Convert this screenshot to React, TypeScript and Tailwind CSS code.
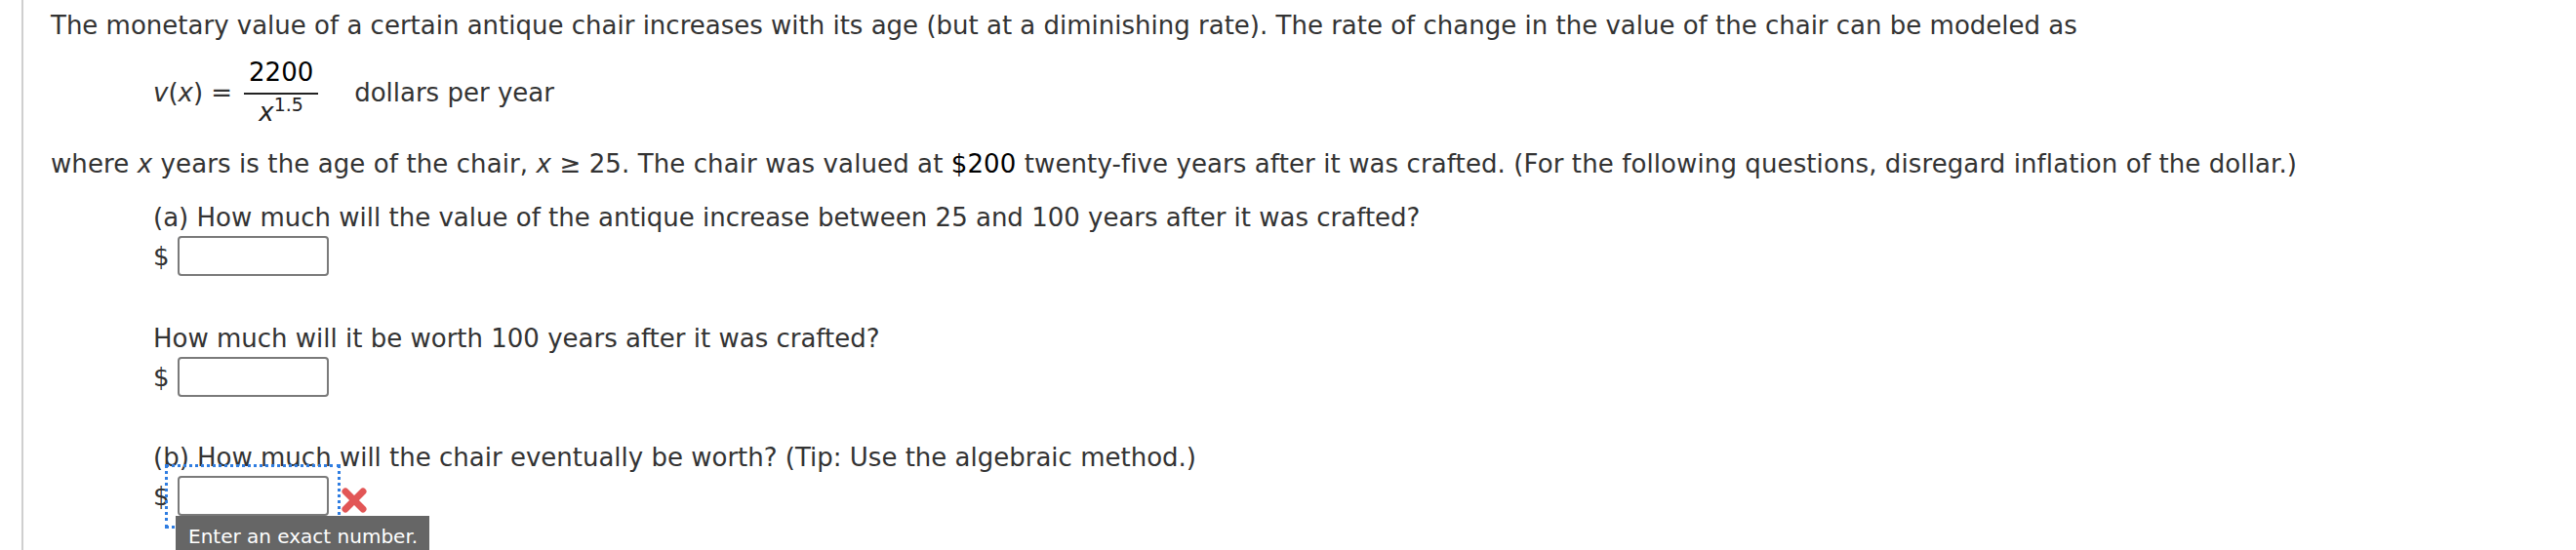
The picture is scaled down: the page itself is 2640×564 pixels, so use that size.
// WebAssign-style question: chair value model with three answer blanks.

function AnswerBox() {
  return <div className="h-[41px] w-[155px] rounded-[4px] border-2 border-[#7a7a7a] bg-white" />;
}

function AnswerRow({ invalid }: { invalid?: boolean }) {
  return (
    <div className="relative mt-[1px] flex h-[41px] items-center">
      <span className="leading-[30px]">$</span>
      <div className="ml-[8px]">
        <AnswerBox />
      </div>
      {invalid && (
        <>
          <svg className="ml-[12px] mt-[8px]" width="28" height="28" viewBox="0 0 28 28">
            <path d="M5 5 L23 23 M23 5 L5 23" stroke="#e25656" strokeWidth="7" strokeLinecap="round" />
          </svg>
          <div className="pointer-events-none absolute left-[12px] top-[-12px] h-[66px] w-[180px] border-[3px] border-dotted border-[#2f7de1]" />
          <div className="absolute left-[23px] top-[41px] h-[40px] w-[260px] bg-[#666] pl-[13px] pt-[4px] text-[20px] leading-[34px] text-white whitespace-nowrap">
            Enter an exact number.
          </div>
        </>
      )}
    </div>
  );
}

function Equation() {
  return (
    <div className="ml-[105px] mt-[15px] flex items-start">
      <span className="mt-[21px] leading-[30px] whitespace-nowrap">
        <i>v</i>(<i>x</i>) =
      </span>
      <div className="ml-[12px] flex w-[76px] flex-col items-center">
        <span className="leading-[30px] text-black">2200</span>
        <div className="mt-[6px] h-[2px] w-full bg-[#222]" />
        <div className="flex items-start pt-[1px] leading-[30px] text-[#222]">
          <i className="mt-[2px]">x</i>
          <span className="text-[19px] leading-none">1.5</span>
        </div>
      </div>
      <span className="ml-[37px] mt-[21px] leading-[30px] whitespace-nowrap">dollars per year</span>
    </div>
  );
}

export default function App() {
  return (
    <div className="h-[564px] w-[2640px] overflow-hidden bg-white font-['DejaVu_Sans',Verdana,sans-serif] text-[26px] text-[#333]">
      <div className="ml-[22px] h-full border-l-2 border-[#cfcfcf] pl-[28px] pt-[8px]">
        <p className="leading-[36px] whitespace-nowrap">
          The monetary value of a certain antique chair increases with its age (but at a diminishing rate). The rate of
          change in the value of the chair can be modeled as
        </p>
        <Equation />
        <p className="mt-[20px] leading-[36px] whitespace-nowrap tracking-[0.1px]">
          where <i>x</i> years is the age of the chair, <i>x</i> ≥ 25. The chair was valued at{' '}
          <span className="text-black">$200</span> twenty-five years after it was crafted. (For the following questions,
          disregard inflation of the dollar.)
        </p>
        <div className="ml-[105px]">
          <p className="mt-[19px] leading-[36px] whitespace-nowrap">
            (a) How much will the value of the antique increase between 25 and 100 years after it was crafted?
          </p>
          <AnswerRow />
          <p className="mt-[46px] leading-[36px] whitespace-nowrap">How much will it be worth 100 years after it was crafted?</p>
          <AnswerRow />
          <p className="mt-[44px] leading-[36px] whitespace-nowrap">
            (b) How much will the chair eventually be worth? (Tip: Use the algebraic method.)
          </p>
          <AnswerRow invalid />
        </div>
      </div>
    </div>
  );
}
